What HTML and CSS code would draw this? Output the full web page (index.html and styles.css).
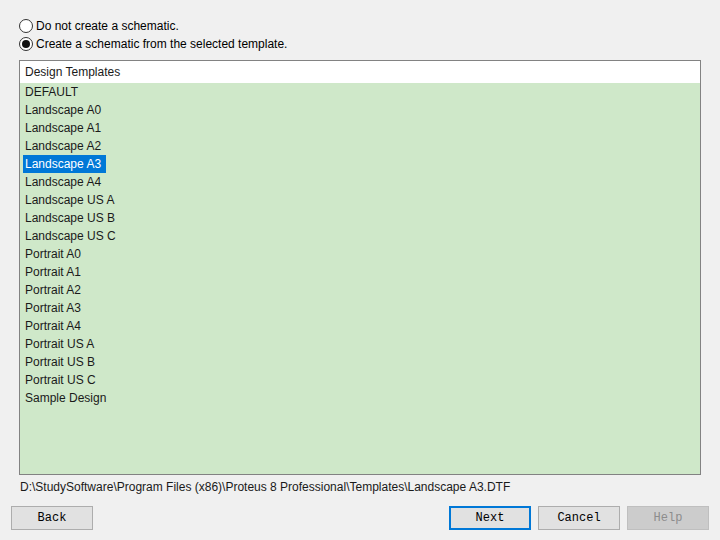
FILE: index.html
```html
<!DOCTYPE html>
<html>
<head>
<meta charset="utf-8">
<link rel="stylesheet" href="styles.css">
</head>
<body>
<div class="page">
  <div class="radios">
    <label class="radio"><span class="circle"></span><span>Do not create a schematic.</span></label>
    <label class="radio"><span class="circle checked"></span><span>Create a schematic from the selected template.</span></label>
  </div>
  <div class="list">
    <div class="list-header">Design Templates</div>
    <div class="list-body">
      <div class="item"><span>DEFAULT</span></div>
      <div class="item"><span>Landscape A0</span></div>
      <div class="item"><span>Landscape A1</span></div>
      <div class="item"><span>Landscape A2</span></div>
      <div class="item"><span class="selected">Landscape A3</span></div>
      <div class="item"><span>Landscape A4</span></div>
      <div class="item"><span>Landscape US A</span></div>
      <div class="item"><span>Landscape US B</span></div>
      <div class="item"><span>Landscape US C</span></div>
      <div class="item"><span>Portrait A0</span></div>
      <div class="item"><span>Portrait A1</span></div>
      <div class="item"><span>Portrait A2</span></div>
      <div class="item"><span>Portrait A3</span></div>
      <div class="item"><span>Portrait A4</span></div>
      <div class="item"><span>Portrait US A</span></div>
      <div class="item"><span>Portrait US B</span></div>
      <div class="item"><span>Portrait US C</span></div>
      <div class="item"><span>Sample Design</span></div>
    </div>
  </div>
  <div class="path">D:\StudySoftware\Program Files (x86)\Proteus 8 Professional\Templates\Landscape A3.DTF</div>
  <div class="buttons">
    <button class="btn">Back</button>
    <div class="spacer"></div>
    <button class="btn default">Next</button>
    <button class="btn">Cancel</button>
    <button class="btn disabled">Help</button>
  </div>
</div>
</body>
</html>
```
FILE: styles.css
```css
html, body {
  margin: 0;
  padding: 0;
  background: #f0f0f0;
}
body {
  font-family: "Liberation Sans", Arial, sans-serif;
  font-size: 12px;
  color: #000;
}
.page {
  width: 720px;
  height: 540px;
  display: flex;
  flex-direction: column;
}
.radios {
  padding: 17px 0 0 19px;
  display: flex;
  flex-direction: column;
}
.radio {
  display: flex;
  align-items: center;
  height: 18px;
  gap: 3px;
}
.circle {
  width: 12px;
  height: 12px;
  border: 1px solid #333;
  border-radius: 50%;
  background: #fff;
  box-sizing: content-box;
  position: relative;
}
.circle.checked::after {
  content: "";
  position: absolute;
  left: 2px;
  top: 2px;
  width: 8px;
  height: 8px;
  border-radius: 50%;
  background: #111;
}
.list {
  margin: 7px 0 0 19px;
  width: 680px;
  height: 413px;
  border: 1px solid #828282;
  display: flex;
  flex-direction: column;
}
.list-header {
  height: 22px;
  line-height: 22px;
  background: #fff;
  padding-left: 5px;
  color: #1a1a1a;
}
.list-body {
  flex: 1;
  background: #cfe8c9;
}
.item {
  height: 18px;
  line-height: 18px;
  padding-left: 3px;
}
.item span {
  display: inline-block;
  padding: 0 2px;
  color: #1a1a1a;
}
.item span.selected {
  background: #0078d7;
  color: #fff;
  width: 79px;
}
.path {
  margin: 3px 0 0 20px;
  height: 18px;
  line-height: 18px;
  color: #1a1a1a;
}
.buttons {
  margin-top: 10px;
  padding: 0 11px;
  display: flex;
  gap: 7px;
}
.spacer {
  flex: 1;
}
.btn {
  width: 82px;
  height: 24px;
  margin: 0;
  padding: 0;
  border: 1px solid #adadad;
  background: #e1e1e1;
  font-family: "Liberation Mono", "Courier New", monospace;
  font-size: 12px;
  color: #000;
}
.btn.default {
  border: 2px solid #0078d7;
}
.btn.disabled {
  color: #8c8c8c;
  background: #cccccc;
  border-color: #bfbfbf;
}
```
